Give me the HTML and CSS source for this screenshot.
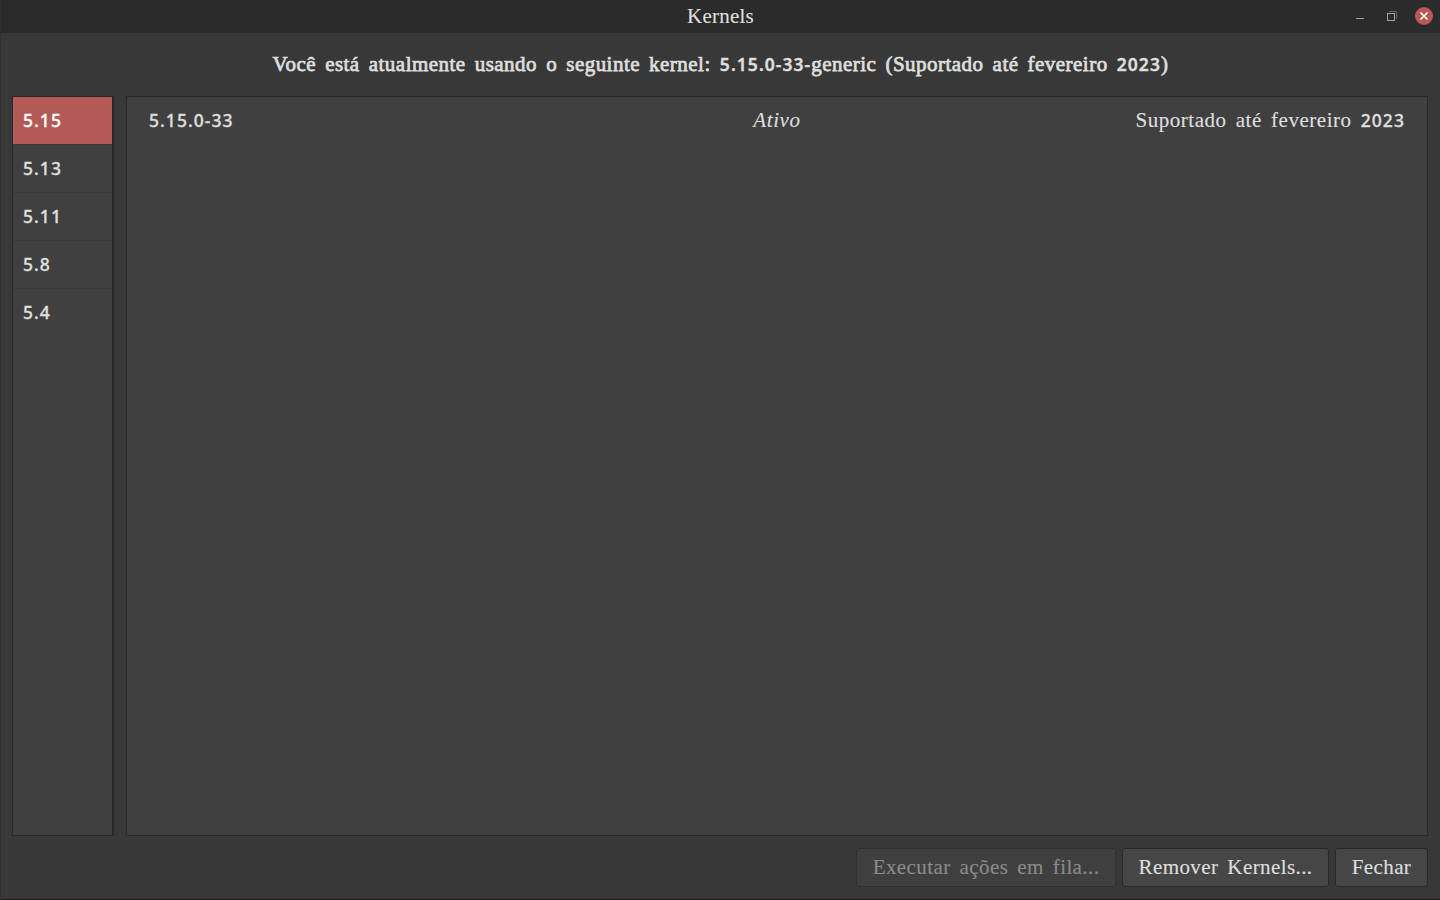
FILE: index.html
```html
<!DOCTYPE html>
<html lang="pt-BR">
<head>
<meta charset="utf-8">
<title>Kernels</title>
<link rel="stylesheet" href="styles.css">
</head>
<body>
<div class="window">
  <header class="titlebar">
    <div class="title">Kernels</div>
    <div class="controls">
      <svg width="16" height="18" viewBox="0 0 16 18"><path d="M5 11.5h8" stroke="#a3a3a3"/></svg>
      <svg width="16" height="18" viewBox="0 0 16 18"><path d="M6 4.5h7.5V12" fill="none" stroke="#646464"/><rect x="4.5" y="6.5" width="7" height="7" fill="none" stroke="#a3a3a3"/></svg>
      <svg width="18" height="18" viewBox="0 0 18 18"><circle cx="9" cy="9" r="9" fill="#b35a57"/><path d="M5.5 5.5l7 7M12.5 5.5l-7 7" stroke="#fff" stroke-width="1.6"/></svg>
    </div>
  </header>
  <h1 class="heading">Você está atualmente usando o seguinte kernel: <span class="num">5.15.0-33-</span>generic (Suportado até fevereiro <span class="num">2023</span>)</h1>
  <main class="content">
    <nav class="sidebar">
      <div class="version selected"><span class="num">5.15</span></div>
      <div class="version"><span class="num">5.13</span></div>
      <div class="version"><span class="num">5.11</span></div>
      <div class="version"><span class="num">5.8</span></div>
      <div class="version last"><span class="num">5.4</span></div>
    </nav>
    <section class="panel">
      <div class="kernel">
        <div><span class="num">5.15.0-33</span></div>
        <div class="status">Ativo</div>
        <div class="support">Suportado até fevereiro <span class="num">2023</span></div>
      </div>
    </section>
  </main>
  <footer class="actions">
    <button class="btn queue" disabled>Executar ações em fila...</button>
    <button class="btn remove">Remover Kernels...</button>
    <button class="btn close">Fechar</button>
  </footer>
</div>
</body>
</html>
```
FILE: styles.css
```css
* { box-sizing: border-box; }
body { margin: 0; background: #383838; }
.window {
  width: 1440px; height: 900px;
  display: flex; flex-direction: column;
  border-left: 1px solid #303030;
  border-bottom: 1px solid #201a1c;
  background: #383838; color: #dedede;
  font: 21px/24px "Liberation Serif", serif;
  letter-spacing: 0.4px; word-spacing: 3.4px;
  -webkit-text-stroke: 0.15px;
  white-space: nowrap;
}
.num {
  font-family: "Noto Sans", sans-serif; font-size: 17.5px; font-weight: 500;
  line-height: 20px; letter-spacing: 1.05px; -webkit-text-stroke: 0.35px;
}
.titlebar {
  height: 33px; flex: none;
  display: grid; grid-template-columns: 1fr auto 1fr; align-items: center;
  background: #2b2b2b;
}
.title { grid-column: 2; padding-bottom: 2px; letter-spacing: 0.25px; }
.controls { justify-self: end; display: flex; align-items: center; gap: 16px; padding: 0 7px 2px 0; }
.controls svg { display: block; }
.heading {
  height: 63px; margin: 0; padding-top: 19px; flex: none;
  text-align: center; font-size: 21px; font-weight: 400;
  letter-spacing: 0.47px; -webkit-text-stroke: 0.75px;
}
.heading .num { font-weight: 600; -webkit-text-stroke: 0.4px; }
.content { flex: 1; display: flex; gap: 12px; padding: 0 12px 0 11px; }
.sidebar { width: 102px; border: 1px solid #292929; border-right-width: 2px; background: #404040; }
.version { height: 48px; padding: 11px 0 0 10px; border-bottom: 1px solid #3a3a3a; }
.version.selected { background: #b35a57; color: #fff; }
.version.last { border-bottom: 0; }
.panel { flex: 1; border: 1px solid #292929; background: #404040; }
.kernel { display: grid; grid-template-columns: 1fr auto 1fr; padding: 11px 22px 0; }
.status { font-style: italic; letter-spacing: 0.6px; }
.support { text-align: right; letter-spacing: 0.53px; }
.actions { height: 63px; flex: none; display: flex; justify-content: flex-end; gap: 6px; padding: 12px 12px 0 0; }
.btn {
  height: 39px; padding: 0 0 2px; border: 1px solid #292929; border-radius: 3px;
  background: #464646; color: inherit; font: inherit;
  letter-spacing: inherit; word-spacing: inherit;
}
.btn:disabled { background: #3f3f3f; border-color: #303030; color: #8b8b8b; }
.queue { width: 260px; }
.remove { width: 207px; }
.close { width: 93px; }
```
